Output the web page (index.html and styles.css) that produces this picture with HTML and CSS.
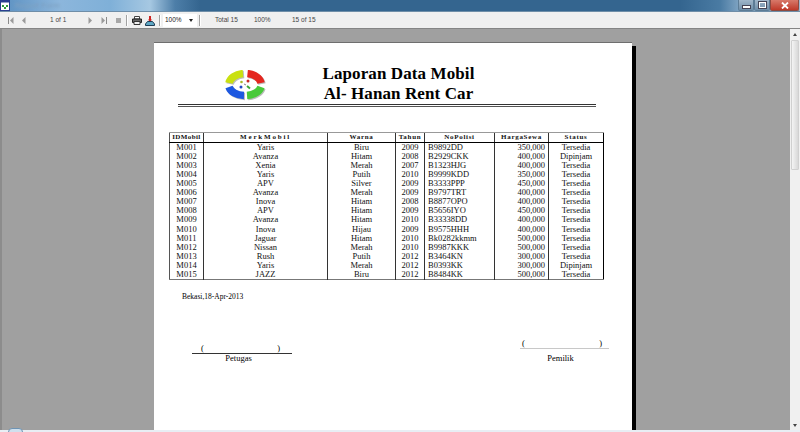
FILE: index.html
```html
<!DOCTYPE html>
<html lang="id">
<head>
<meta charset="utf-8">
<title>Report Form</title>
<link rel="stylesheet" href="styles.css">
</head>
<body>
<div class="window">
  <header class="titlebar">
    <svg class="appicon" width="10" height="11" viewBox="0 0 10 11"><rect x="0.5" y="0.5" width="9" height="10" fill="#fff" stroke="#2a3f8f"/><rect x="0.5" y="0.5" width="9" height="2" fill="#2a3f8f"/><path d="M2 5h2v2H2zM6 5h2v2H6zM4 7h2v2H4z" fill="#2f9a3a"/></svg>
    <span class="wintitle">Report Form</span>
    <div class="winbtns">
      <span class="winbtn"><i class="min"></i></span>
      <span class="winbtn"><i class="max"></i></span>
      <span class="winbtn close"><svg width="8" height="7" viewBox="0 0 8 7"><path d="M1 0.5l6 6M7 0.5l-6 6" stroke="#fff" stroke-width="1.8"/></svg></span>
    </div>
  </header>

  <nav class="toolbar">
    <svg class="tool first" width="6" height="7" viewBox="0 0 6 7"><path d="M0.5 0v7" stroke="#8a8a8a"/><path d="M5.5 0v7L2 3.5z" fill="#9a9a9a"/></svg>
    <svg class="tool prev" width="5" height="7" viewBox="0 0 5 7"><path d="M4.5 0v7L1 3.5z" fill="#9a9a9a"/></svg>
    <span class="pageno">1 of 1</span>
    <svg class="tool next" width="5" height="7" viewBox="0 0 5 7"><path d="M0.5 0v7L4 3.5z" fill="#9a9a9a"/></svg>
    <svg class="tool last" width="6" height="7" viewBox="0 0 6 7"><path d="M0.5 0v7L4 3.5z" fill="#9a9a9a"/><path d="M5.5 0v7" stroke="#8a8a8a"/></svg>
    <span class="stop"></span>
    <span class="sep s1"></span>
    <svg class="print" width="10" height="9" viewBox="0 0 10 9"><path d="M2.500 0.500h5v2.500h-5z" fill="#fff" stroke="#444"/><path d="M0.500 3h9v3.500h-9z" fill="#666" stroke="#222"/><path d="M2 5.500h6v3H2z" fill="#eee" stroke="#333"/></svg>
    <svg class="export" width="10" height="10" viewBox="0 0 10 10"><path d="M5 0v4" stroke="#c22" stroke-width="2"/><path d="M3 3.500h4L5 6z" fill="#c22"/><path d="M2.500 5.500h5l2 2.500v1.500H0.500V8z" fill="#5fa7c4" stroke="#1d3d55"/></svg>
    <span class="sep s2"></span>
    <span class="combo"><span>100%</span><i></i></span>
    <span class="sep s3"></span>
    <span class="stat st1">Total 15</span>
    <span class="stat st2">100%</span>
    <span class="stat st3">15 of 15</span>
  </nav>

  <div class="viewer">
    <main class="canvas">
      <article class="page">
        <section class="head">
          <svg class="logo" width="42" height="31" viewBox="0 0 42 31">
            <g fill="none" stroke-width="7.500">
              <g stroke="#bdbdbd" transform="translate(1 1)">
                <path d="M4 13A16 11 0 0 1 18 3.600"/>
                <path d="M22.500 3.600A16 11 0 0 1 36 13"/>
                <path d="M4 17A16 11 0 0 0 19 25.500"/>
                <path d="M36 17A16 11 0 0 1 22 25.500"/>
              </g>
              <path d="M4 13A16 11 0 0 1 18 3.600" stroke="#c9e010"/>
              <path d="M22.500 3.600A16 11 0 0 1 36 13" stroke="#e4261f"/>
              <path d="M4 17A16 11 0 0 0 19 25.500" stroke="#1d58e0"/>
              <path d="M36 17A16 11 0 0 1 22 25.500" stroke="#49c93a"/>
            </g>
            <circle cx="16.500" cy="12" r="1.300" fill="#a9b82a"/>
            <circle cx="23" cy="11" r="1.500" fill="#c92a26"/>
            <circle cx="16" cy="17" r="1.500" fill="#2048c4"/>
            <path d="M22 16l3 2.500" stroke="#3aa838" stroke-width="2"/>
            <path d="M19 14l2 1" stroke="#888" stroke-width="1"/>
          </svg>
          <h1 class="title">Laporan Data Mobil<br>Al- Hanan Rent Car</h1>
        </section>
        <div class="rule"></div>

        <table class="report">
          <colgroup>
            <col class="c1"><col class="c2"><col class="c3"><col class="c4"><col class="c5"><col class="c6"><col class="c7">
          </colgroup>
          <thead>
            <tr><th>IDMobil</th><th>MerkMobil</th><th>Warna</th><th>Tahun</th><th>NoPolisi</th><th>HargaSewa</th><th>Status</th></tr>
          </thead>
          <tbody>
            <tr><td>M001</td><td>Yaris</td><td>Biru</td><td>2009</td><td class="l">B9892DD</td><td class="r">350,000</td><td>Tersedia</td></tr>
            <tr><td>M002</td><td>Avanza</td><td>Hitam</td><td>2008</td><td class="l">B2929CKK</td><td class="r">400,000</td><td>Dipinjam</td></tr>
            <tr><td>M003</td><td>Xenia</td><td>Merah</td><td>2007</td><td class="l">B1323HJG</td><td class="r">400,000</td><td>Tersedia</td></tr>
            <tr><td>M004</td><td>Yaris</td><td>Putih</td><td>2010</td><td class="l">B9999KDD</td><td class="r">350,000</td><td>Tersedia</td></tr>
            <tr><td>M005</td><td>APV</td><td>Silver</td><td>2009</td><td class="l">B3333PPP</td><td class="r">450,000</td><td>Tersedia</td></tr>
            <tr><td>M006</td><td>Avanza</td><td>Merah</td><td>2009</td><td class="l">B9797TRT</td><td class="r">400,000</td><td>Tersedia</td></tr>
            <tr><td>M007</td><td>Inova</td><td>Hitam</td><td>2008</td><td class="l">B8877OPO</td><td class="r">400,000</td><td>Tersedia</td></tr>
            <tr><td>M008</td><td>APV</td><td>Hitam</td><td>2009</td><td class="l">B5656IYO</td><td class="r">450,000</td><td>Tersedia</td></tr>
            <tr><td>M009</td><td>Avanza</td><td>Hitam</td><td>2010</td><td class="l">B33338DD</td><td class="r">400,000</td><td>Tersedia</td></tr>
            <tr><td>M010</td><td>Inova</td><td>Hijau</td><td>2009</td><td class="l">B9575HHH</td><td class="r">400,000</td><td>Tersedia</td></tr>
            <tr><td>M011</td><td>Jaguar</td><td>Hitam</td><td>2010</td><td class="l">Bk0282kkmm</td><td class="r">500,000</td><td>Tersedia</td></tr>
            <tr><td>M012</td><td>Nissan</td><td>Merah</td><td>2010</td><td class="l">B9987KKK</td><td class="r">500,000</td><td>Tersedia</td></tr>
            <tr><td>M013</td><td>Rush</td><td>Putih</td><td>2012</td><td class="l">B3464KN</td><td class="r">300,000</td><td>Tersedia</td></tr>
            <tr><td>M014</td><td>Yaris</td><td>Merah</td><td>2012</td><td class="l">B0393KK</td><td class="r">300,000</td><td>Dipinjam</td></tr>
            <tr><td>M015</td><td>JAZZ</td><td>Biru</td><td>2012</td><td class="l">B8484KK</td><td class="r">500,000</td><td>Tersedia</td></tr>
          </tbody>
        </table>

        <p class="date">Bekasi,18-Apr-2013</p>

        <section class="signs">
          <div class="sign left">
            <div class="paren"><span>(</span><span>)</span></div>
            <div class="name">Petugas</div>
          </div>
          <div class="sign right">
            <div class="paren"><span>(</span><span>)</span></div>
            <div class="name">Pemilik</div>
          </div>
        </section>
      </article>
    </main>
    <aside class="scrollbar">
      <span class="arrow up"></span>
      <span class="track"><span class="thumb"></span></span>
      <span class="arrow down"></span>
    </aside>
  </div>
  <footer class="bottom"><span class="orb"></span></footer>
</div>
</body>
</html>
```

FILE: styles.css
```css
* { box-sizing: border-box; }
html, body { margin: 0; padding: 0; height: 100%; overflow: hidden; }
body { font-family: "Liberation Serif", serif; color: #000; background: #a0a0a0; }

.window { width: 800px; height: 432px; display: flex; flex-direction: column; overflow: hidden; }

/* title bar */
.titlebar {
  height: 12px; flex: none; display: flex; align-items: flex-start; position: relative;
  background: linear-gradient(90deg, #5a8fc0 0, #8cb6dc 60px, #7fb0d8 110px, #a6c8e2 150px, #4d7ea8 175px, #34658f 200px, #34658f 680px, #4a7ba3 720px, #8fb0cc 745px, #9db8cf 800px);
  border-bottom: 1px solid #6f8ea8;
}
.appicon { flex: none; }
.wintitle { margin-left: 5px; font: 8px/11px "Liberation Sans", sans-serif; color: #7ea0bf; filter: blur(1.2px); }
.winbtns { margin-left: auto; margin-right: 1px; display: flex; height: 11px; }
.winbtn { width: 16px; height: 11px; display: flex; align-items: center; justify-content: center; background: linear-gradient(#9fb6ca, #6f8fa9); border: 1px solid #5c7c96; border-top: 0; border-radius: 0 0 2px 2px; }
.winbtn.close { width: 29px; background: linear-gradient(#d8796a, #bf3a2a); border-color: #8d4a40; }
.min { display: block; width: 7px; height: 2px; background: #fff; box-shadow: 0 0 0 1px #445; margin-top: 3px; }
.max { display: block; width: 7px; height: 6px; border: 1px solid #fff; outline: 1px solid #445; }

/* toolbar */
.toolbar {
  height: 17px; flex: none; position: relative; display: flex; align-items: center; padding-top: 1px;
  background: #f0f0f0; border-bottom: 1px solid #858585;
  font: 6.500px/1 "Liberation Sans", sans-serif; color: #444;
}
.tool { flex: none; }
.first { margin-left: 8px; }
.prev { margin-left: 7px; }
.pageno { margin-left: 24px; width: 26px; }
.next { margin-left: 12px; }
.last { margin-left: 8px; }
.stop { width: 5px; height: 5px; background: #a8a8a8; margin-left: 9px; }
.sep { width: 1px; height: 11px; background: #a2a2a2; box-shadow: 1px 0 0 #fff; flex: none; }
.s1 { margin-left: 5px; }
.print { margin-left: 5px; }
.export { margin-left: 3px; }
.s2 { margin-left: 4px; }
.combo { width: 34px; height: 13px; margin-left: 3px; background: #fff; display: flex; align-items: center; justify-content: space-between; padding: 0 4px 0 2px; color: #222; }
.combo i { width: 0; height: 0; border: 2.500px solid transparent; border-top: 3px solid #222; border-bottom: 0; }
.s3 { margin-left: 2px; }
.stat { flex: none; }
.st1 { margin-left: 15px; width: 39px; }
.st2 { width: 38px; }

/* viewer */
.viewer { flex: 1; min-height: 0; display: flex; background: #a0a0a0; border-left: 2px solid #8c8c8c; }
.canvas { flex: 1; min-width: 0; overflow: hidden; padding: 13px 0 0 152px; }
.page {
  width: 478px; height: 700px; background: #fff; border-top: 1px solid #6e6e6e;
  box-shadow: 4px 4px 0 #000; padding: 0 0 0 15px;
}

.head { display: flex; align-items: flex-start; padding: 19px 0 0 56px; height: 61px; }
.logo { flex: none; margin-top: 8px; }
.title { margin: 2px 0 0 42px; width: 179px; font: bold 17px/20px "Liberation Serif", serif; letter-spacing: .1px; text-align: center; color: #000; white-space: nowrap; }
.rule { margin-left: 9px; width: 418px; height: 3px; border-top: 1px solid #333; border-bottom: 1px solid #555; }

/* table */
.report { margin-top: 25px; width: 434px; border-collapse: collapse; table-layout: fixed; font-size: 8.500px; line-height: 9px; color: #111; border-bottom: 1px solid #777; border-right: 1px solid #000; border-left: 1px solid #555; }
.c1 { width: 34px; } .c2 { width: 124px; } .c3 { width: 68px; } .c4 { width: 29px; } .c5 { width: 70px; } .c6 { width: 54px; } .c7 { width: 55px; }
.report th { height: 10px; padding: 0; font-size: 7px; font-weight: bold; letter-spacing: .7px; color: #111; border-top: 1px solid #999; border-bottom: 1.500px solid #000; border-left: 1px solid #333; white-space: nowrap; overflow: hidden; }
.report th:first-child { letter-spacing: .4px; border-left: 0; }
.report th:nth-child(2) { letter-spacing: 1.8px; }
.report td { height: 9.070px; padding: 0; text-align: center; border-left: 1px solid #333; white-space: nowrap; }
.report td:first-child { border-left: 0; }
.report .l { text-align: left; padding-left: 3px; }
.report .r { text-align: right; padding-right: 3px; }

.date { margin: 12px 0 0 13px; font-size: 7.500px; line-height: 10px; }

/* signatures */
.signs { display: flex; align-items: flex-start; font-size: 8.500px; line-height: 10px; }
.sign .paren { display: flex; justify-content: space-between; }
.sign.left { width: 100px; margin: 41px 0 0 23px; }
.sign.left .paren { padding: 0 12px 0 9px; border-bottom: 1px solid #333; height: 11px; }
.sign.left .name { text-align: center; margin: -1px 7px 0 0; }
.sign.right { width: 89px; margin: 36px 0 0 228px; }
.sign.right .paren { padding: 0 7px 0 2px; border-bottom: 1px solid #c8c8c8; height: 11px; }
.sign.right .name { text-align: center; margin: 4px 8px 0 0; }

/* scrollbar */
.scrollbar { width: 10px; flex: none; background: #f0f0f0; display: flex; flex-direction: column; }
.arrow { height: 10px; flex: none; position: relative; display: flex; justify-content: center; align-items: center; }
.arrow::after { content: ""; border: 2.500px solid transparent; }
.arrow.up::after { border-top: 0; border-bottom: 3px solid #444; }
.arrow.down::after { border-bottom: 0; border-top: 3px solid #444; }
.track { flex: 1; display: flex; padding: 1px 1px; }
.thumb { width: 100%; height: 130px; background: linear-gradient(90deg, #f4f4f4, #d8d8d8); border: 1px solid #d0d0d0; border-radius: 1px; }

.bottom { height: 2px; flex: none; background: #e8eef4; position: relative; }
.orb { position: absolute; left: 8px; top: -2px; width: 15px; height: 8px; background: #cfe0ee; border: 1px solid #6e93b3; border-radius: 6px; }
```
